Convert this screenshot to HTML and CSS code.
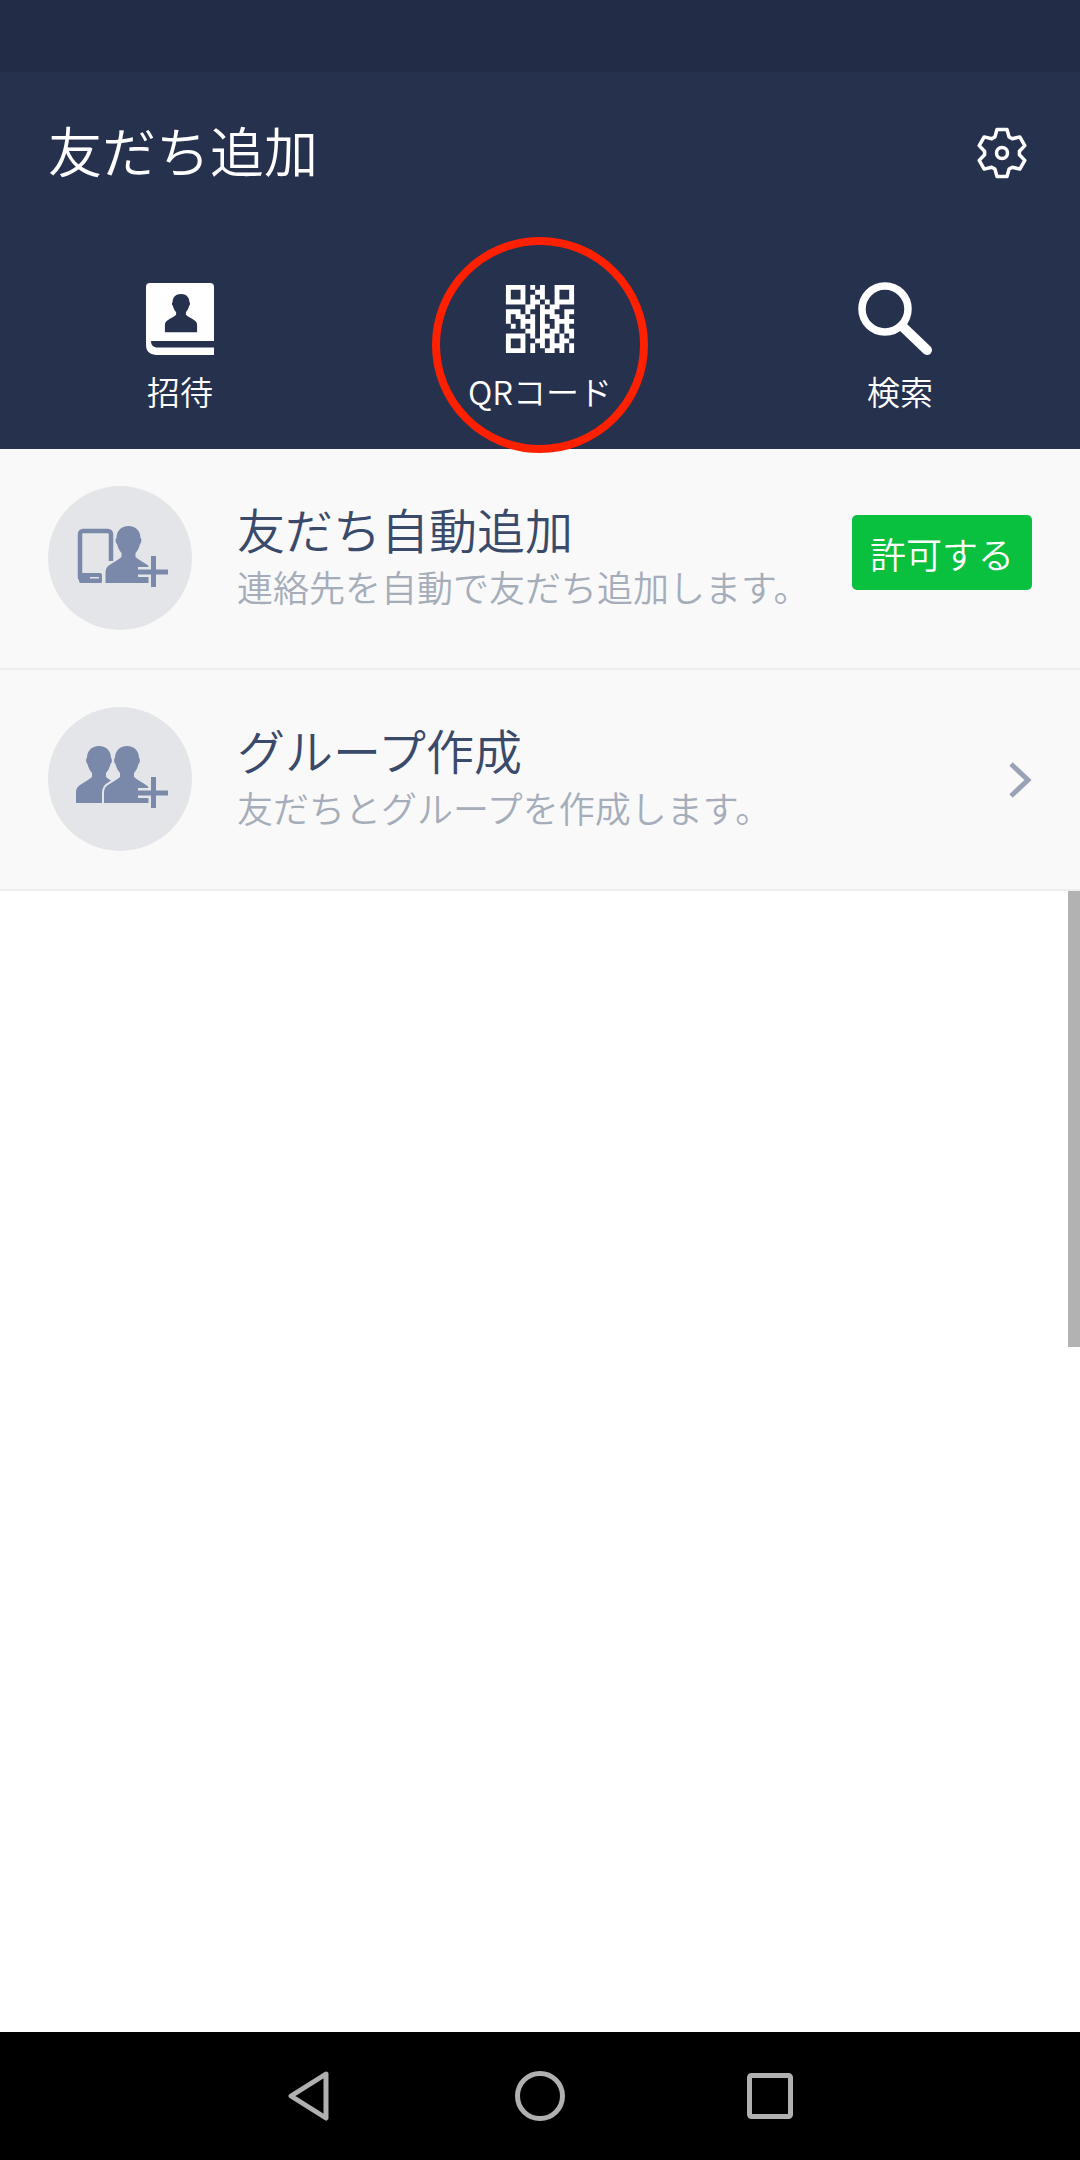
FILE: index.html
```html
<!DOCTYPE html>
<html lang="ja">

<head>
    <meta charset="UTF-8">
    <meta name="viewport" content="width=device-width, initial-scale=1.0">
    <title>友だち追加</title>
    <link rel="stylesheet" href="styles.css">
</head>

<body>
    <svg class="defs" width="0" height="0">
        <defs>
            <path id="person" d="M0 0c-7.500 0-12 5-12 12-1.500.5-1 5 .5 6 1 4 2.500 7 4.500 9v4c-3 3-8 5-12 8-3 2-4 4-4 8v10h46V47c0-4-1-6-4-8-4-3-9-5-12-8v-4c2-2 3.500-5 4.500-9 1.500-1 2-5.500.5-6 0-7-4.500-12-12-12z" />
        </defs>
    </svg>

    <header class="header">
        <div class="status"></div>
        <div class="title-row">
            <h1 class="title">友だち追加</h1>
            <svg class="gear" width="54" height="54" viewBox="-27 -27 54 54">
                <polygon points="-7.1,-16 -5,-23.5 5,-23.5 7.1,-16 10.3,-14.200 17.8,-16.100 22.8,-7.400 17.400,-1.800 17.400,1.800 22.800,7.400 17.800,16.100 10.300,14.200 7.100,16 5,23.500 -5,23.500 -7.100,16 -10.300,14.200 -17.800,16.100 -22.800,7.400 -17.400,1.800 -17.400,-1.800 -22.800,-7.400 -17.800,-16.100 -10.300,-14.200" />
                <circle r="5.500" />
            </svg>
        </div>
        <nav class="tabs">
            <div class="tab">
                <svg width="68" height="74" viewBox="0 0 68 74">
                    <path fill="#fff" d="M4 1h60a4 4 0 0 1 4 4v68H12C6 73 0 71 0 63V5a4 4 0 0 1 4-4z" />
                    <path fill="#26314e" d="M5 59c0 4 2 6.500 7 6.500h56V59z" />
                    <use href="#person" fill="#26314e" transform="translate(35 12) scale(.7 .67)" />
                </svg>
                <span class="tab-label">招待</span>
            </div>
            <div class="tab">
                <div class="ring"></div>
                <svg width="74" height="74" viewBox="-.6 -.6 15.2 15.2">
                    <path stroke="#fff" fill="none" d="M0 .5h4M5 .5h1M7 .5h1M10 .5h4M0 1.500h1M3 1.500h1M6 1.500h2M10 1.500h1M13 1.500h1M0 2.500h1M3 2.500h1M5 2.500h1M7 2.500h1M10 2.500h1M13 2.500h1M0 3.500h4M5 3.500h2M8 3.500h1M10 3.500h4M4 4.500h2M7 4.500h1M9 4.500h2M0 5.500h3M4 5.500h1M7 5.500h3M12 5.500h2M0 6.500h1M2 6.500h2M5 6.500h1M7 6.500h1M9 6.500h2M12 6.500h1M0 7.500h1M3 7.500h3M7 7.500h1M10 7.500h4M1 8.500h1M3 8.500h1M5 8.500h1M7 8.500h2M10 8.500h1M12 8.500h1M4 9.500h2M7 9.500h1M9 9.500h2M12 9.500h2M0 10.500h4M5 10.500h1M7 10.500h3M11 10.500h1M13 10.500h1M0 11.500h1M3 11.500h1M6 11.500h2M9 11.500h1M11 11.500h2M0 12.500h1M3 12.500h1M5 12.500h1M7 12.500h1M9 12.500h3M13 12.500h1M0 13.500h4M5 13.500h1M8 13.500h2M11 13.500h1M13 13.500h1" />
                </svg>
                <span class="tab-label">QRコード</span>
            </div>
            <div class="tab">
                <svg width="84" height="74" viewBox="0 0 84 74">
                    <circle cx="27" cy="27" r="23" fill="none" stroke="#fff" stroke-width="7.500" />
                    <path d="M45 45l24 23" stroke="#fff" stroke-width="10" stroke-linecap="round" />
                </svg>
                <span class="tab-label">検索</span>
            </div>
        </nav>
    </header>

    <main class="content">
        <div class="row">
            <div class="avatar">
                <svg width="144" height="144" viewBox="8 6 144 144">
                    <g fill="#7a88a9">
                        <path fill="none" stroke="#7a88a9" stroke-width="4.500" d="M62 100H43a3 3 0 0 1-3-3V54a3 3 0 0 1 3-3h25a3 3 0 0 1 3 3v27" />
                        <rect x="39" y="93" width="23" height="10" rx="2" />
                        <rect x="50" y="97" width="9" height="1.500" fill="#e4e5e8" />
                        <use href="#person" transform="translate(88.500 46)" />
                    </g>
                    <path class="plus-halo" d="M98 92h30M113.500 76v31" />
                    <path class="plus" d="M98 92h30M113.500 76v31" />
                </svg>
            </div>
            <div class="row-text">
                <div class="row-title">友だち自動追加</div>
                <div class="row-sub">連絡先を自動で友だち追加します。</div>
            </div>
            <button class="allow">許可する</button>
        </div>
        <div class="row">
            <div class="avatar">
                <svg width="144" height="144" viewBox="8 7 144 144">
                    <g fill="#7a88a9">
                        <use href="#person" transform="translate(59 46)" />
                        <use href="#person" transform="translate(87 46)" stroke="#e4e5e8" stroke-width="4" paint-order="stroke" />
                    </g>
                    <path class="plus-halo" d="M98 93h30M113.500 77v31" />
                    <path class="plus" d="M98 93h30M113.500 77v31" />
                </svg>
            </div>
            <div class="row-text">
                <div class="row-title">グループ作成</div>
                <div class="row-sub">友だちとグループを作成します。</div>
            </div>
            <svg class="chevron" width="24" height="38" viewBox="0 0 24 38">
                <path d="M3 3l17 16L3 35" />
            </svg>
        </div>
        <div class="scrollbar"></div>
    </main>

    <footer class="navbar">
        <svg width="42" height="50" viewBox="0 0 42 50">
            <path d="M38 3L3 25l35 22z" />
        </svg>
        <svg class="nav-home" width="50" height="50" viewBox="0 0 50 50">
            <circle cx="25" cy="25" r="22.500" />
        </svg>
        <svg width="46" height="46" viewBox="0 0 46 46">
            <rect x="2.500" y="2.500" width="41" height="41" rx="2" />
        </svg>
    </footer>
</body>

</html>
```

FILE: styles.css
```css
* {
    box-sizing: border-box;
}

body {
    margin: 0;
    height: 2160px;
    display: flex;
    flex-direction: column;
    background: #fff;
    font-family: "Noto Sans CJK JP", "Noto Sans", sans-serif;
    font-weight: 350;
}

.defs {
    position: absolute;
}

.header {
    background: #26314e;
    color: #fff;
    height: 449px;
}

.status {
    height: 72px;
    background: #222c46;
}

.title-row {
    height: 162px;
    padding: 0 51px 8px 48px;
    display: flex;
    align-items: center;
    justify-content: space-between;
}

.title {
    margin: 0;
    font-size: 54px;
    font-weight: 350;
}

.gear {
    margin-top: 8px;
    fill: none;
    stroke: #fff;
    stroke-width: 3.5;
    stroke-linejoin: round;
}

.tabs {
    display: grid;
    grid-template-columns: repeat(3, 1fr);
    padding-top: 48px;
}

.tab {
    position: relative;
    display: flex;
    flex-direction: column;
    align-items: center;
}

.tab-label {
    margin-top: 15px;
    font-size: 33px;
    line-height: 40px;
}

.ring {
    position: absolute;
    z-index: 1;
    left: 72px;
    top: -45px;
    width: 216px;
    height: 216px;
    border: 8px solid #ff2000;
    border-radius: 50%;
}

.content {
    position: relative;
    flex: 1;
}

.row {
    height: 221px;
    padding: 0 48px;
    display: flex;
    align-items: center;
    background: #f9f9f9;
    border-bottom: 2px solid #eeeeee;
}

.avatar {
    width: 144px;
    height: 144px;
    margin-bottom: 2px;
    border-radius: 50%;
    background: #e4e5e8;
    flex-shrink: 0;
}

.avatar svg {
    display: block;
}

.plus-halo {
    fill: none;
    stroke: #e4e5e8;
    stroke-width: 10;
}

.plus {
    fill: none;
    stroke: #7a88a9;
    stroke-width: 5;
}

.row-text {
    flex: 1;
    margin-left: 45px;
    padding-bottom: 5px;
}

.row-title {
    color: #3a4a6b;
    font-size: 48px;
    line-height: 60px;
}

.row-sub {
    color: #a5adba;
    font-size: 36px;
    line-height: 56px;
}

.allow {
    width: 180px;
    height: 75px;
    margin-bottom: 12px;
    padding: 0;
    border: 0;
    border-radius: 5px;
    background: #09c03f;
    color: #fff;
    font-family: inherit;
    font-weight: 350;
    font-size: 36px;
}

.chevron {
    fill: none;
    stroke: #9aa3b5;
    stroke-width: 5;
}

.scrollbar {
    position: absolute;
    right: 0;
    top: 442px;
    width: 12px;
    height: 456px;
    background: #b2b2b2;
}

.navbar {
    height: 128px;
    background: #000;
    display: flex;
    align-items: center;
    justify-content: center;
    gap: 185px;
}

.nav-home {
    margin-right: -3px;
}

.navbar svg {
    fill: none;
    stroke: #b0b0b0;
    stroke-width: 5;
    stroke-linejoin: round;
}
```
